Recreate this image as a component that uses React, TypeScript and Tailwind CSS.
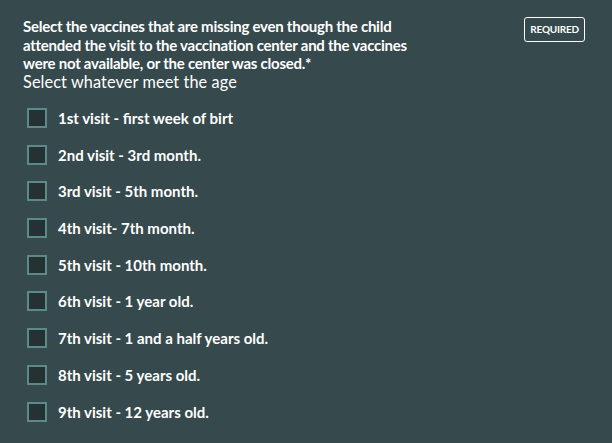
import React from 'react';

const items = [
  '1st visit - first week of birt',
  '2nd visit - 3rd month.',
  '3rd visit - 5th month.',
  '4th visit- 7th month.',
  '5th visit - 10th month.',
  '6th visit - 1 year old.',
  '7th visit - 1 and a half years old.',
  '8th visit - 5 years old.',
  '9th visit - 12 years old.',
];

export default function App() {
  const [checked, setChecked] = React.useState<boolean[]>(items.map(() => false));

  const toggle = (i: number) => {
    setChecked((prev) => prev.map((v, j) => (j === i ? !v : v)));
  };

  return (
    <div className="w-[612px] h-[443px] bg-[#36494c] text-white font-['Lato',sans-serif] overflow-hidden">
      <div className="flex justify-between pl-[23px] pr-[27px] pt-[17px]">
        <div className="w-[470px]">
          <h2 className="w-[400px] text-[15px] font-bold leading-[18.5px] tracking-[-0.25px]">
            Select the vaccines that are missing even though the child attended the visit to the
            vaccination center and the vaccines were not available, or the center was closed.*
          </h2>
          <p className="text-[16.3px] leading-[18px] tracking-[0.1px]">Select whatever meet the age</p>
        </div>
        <div className="h-[25px] px-[5px] border border-white rounded-[3px] flex items-center text-[10px] font-bold tracking-[-0.2px]">
          REQUIRED
        </div>
      </div>

      <ul className="mt-[17.5px] pl-[27px] flex flex-col gap-[16.7px]">
        {items.map((label, i) => (
          <li key={label}>
            <label className="flex items-center gap-[11px] cursor-pointer">
              <span
                onClick={() => toggle(i)}
                className="w-[20px] h-[20px] border-2 border-[#5d8a86] bg-[#253234] flex items-center justify-center shrink-0"
              >
                {checked[i] && <span className="w-[10px] h-[10px] bg-[#5d8a86]" />}
              </span>
              <span className="text-[15px] leading-[20px] font-bold">{label}</span>
            </label>
          </li>
        ))}
      </ul>
    </div>
  );
}
